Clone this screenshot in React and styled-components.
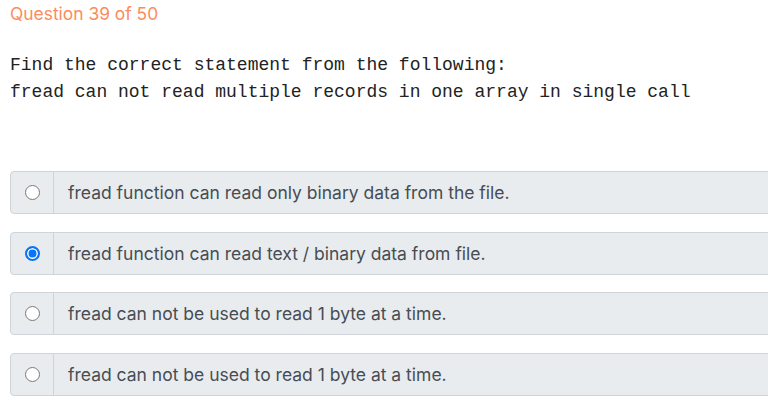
import React from 'react'
import styled, { createGlobalStyle } from 'styled-components'

const options = [
  { id: 1, text: 'fread function can read only binary data from the file.' },
  { id: 2, text: 'fread function can read text / binary data from file.' },
  { id: 3, text: 'fread can not be used to read 1 byte at a time.' },
  { id: 4, text: 'fread can not be used to read 1 byte at a time.' },
]

const App = () => {
  const selected = 2

  return (
    <Page>
      <GlobalStyle />
      <Counter>Question 39 of 50</Counter>
      <Statement>
        Find the correct statement from the following:{'\n'}
        fread can not read multiple records in one array in single call
      </Statement>
      <OptionList>
        {options.map((item) => (
          <Option key={item.id}>
            <RadioCell>
              <Radio checked={item.id === selected} />
            </RadioCell>
            <OptionText>{item.text}</OptionText>
          </Option>
        ))}
      </OptionList>
    </Page>
  )
}

const GlobalStyle = createGlobalStyle`
  body {
    margin: 0;
    background: #ffffff;
  }
`

const Page = styled.div`
  width: 768px;
  height: 420px;
  overflow: hidden;
  padding: 4px 0 0 10px;
  box-sizing: border-box;
  font-family: Inter, "Noto Sans", sans-serif;
`

const Counter = styled.div`
  color: #fb8c5c;
  font-size: 17.4px;
  line-height: 20px;
`

const Statement = styled.pre`
  margin: 28px 0 0 0;
  font-family: "Liberation Mono", monospace;
  font-size: 18px;
  line-height: 27px;
  color: #222;
  white-space: pre;
`

const OptionList = styled.div`
  display: flex;
  flex-direction: column;
  gap: 17.67px;
  margin-top: 65px;
  margin-right: -4px;
`

const Option = styled.div`
  display: flex;
  height: 43px;
  box-sizing: border-box;
  border: 1px solid #ced4da;
  border-radius: 4px;
  background: #e9ecef;
`

const RadioCell = styled.div`
  width: 42px;
  flex: none;
  display: flex;
  align-items: center;
  justify-content: center;
  border-right: 1px solid #ced4da;
`

const Radio = styled.span`
  width: 15px;
  height: 15px;
  box-sizing: border-box;
  border-radius: 50%;
  background: ${(props) => (props.checked ? '#0a75f5' : '#fff')};
  border: ${(props) => (props.checked ? '2px solid #0a75f5' : '1px solid #7a7a7a')};
  box-shadow: ${(props) => (props.checked ? 'inset 0 0 0 1.5px #fff' : 'none')};
`

const OptionText = styled.div`
  display: flex;
  align-items: center;
  padding-left: 14px;
  font-size: 17.5px;
  color: #474d54;
`

export default App
